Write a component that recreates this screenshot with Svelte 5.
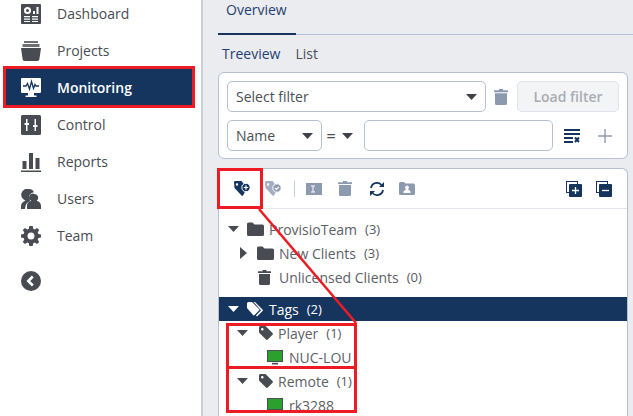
<script>
  const nav = [
    { id: 'dashboard', label: 'Dashboard' },
    { id: 'projects', label: 'Projects' },
    { id: 'monitoring', label: 'Monitoring', active: true },
    { id: 'control', label: 'Control' },
    { id: 'reports', label: 'Reports' },
    { id: 'users', label: 'Users' },
    { id: 'team', label: 'Team' }
  ];
</script>

{#snippet caret(cls)}
  <svg class={cls} viewBox="0 0 11 6" width="11" height="6"><path d="M0 0h11L5.500 6z" fill="currentColor" /></svg>
{/snippet}

{#snippet folder()}
  <svg viewBox="0 0 17 14" width="17" height="14"><path d="M0 2a1.500 1.500 0 0 1 1.500-1.500h4L7.500 2.500h8A1.500 1.500 0 0 1 17 4v8.500a1.500 1.500 0 0 1-1.500 1.500h-14A1.500 1.500 0 0 1 0 12.500z" fill="#484c52" /></svg>
{/snippet}

{#snippet tag()}
  <svg viewBox="0 0 14 14" width="14" height="14"><path d="M0 1.500A1.500 1.500 0 0 1 1.500 0H6.500l7 7a1.300 1.300 0 0 1 0 1.800l-4.700 4.700a1.300 1.300 0 0 1-1.800 0L0 6.500zM3.300 2a1.300 1.300 0 1 0 0 2.600 1.300 1.300 0 0 0 0-2.600z" fill="#484c52" fill-rule="evenodd" /></svg>
{/snippet}

{#snippet monitor()}
  <svg viewBox="0 0 16 16" width="16" height="16">
    <rect x="0.500" y="1.500" width="15" height="11" fill="#2ca02c" stroke="#4a4f55" />
    <path d="M5 13.800h6v1.700H5z" fill="#4a4f55" />
  </svg>
{/snippet}

<div class="page">
  <aside class="sidebar">
    <nav class="nav">
      {#each nav as item}
        <div class="nav-item" class:active={item.active}>
          <span class="nav-icon">
            <svg viewBox="0 0 20 20" width="20" height="20">
              {#if item.id === 'dashboard'}
                <path fill-rule="evenodd" d="M1 0h18a1 1 0 0 1 1 1v18a1 1 0 0 1-1 1H1a1 1 0 0 1-1-1V1a1 1 0 0 1 1-1zM6.500 3a3.500 3.500 0 1 0 0 7 3.500 3.500 0 0 0 0-7zm0 2a1.500 1.500 0 1 1 0 3 1.500 1.500 0 0 1 0-3zM12 7v3h2V7zm3.500-4v7h2V3zM3 12v1.300h6V12zm8 0v1.300h6V12zM3 14.500v1.300h6v-1.300zm8 0v1.300h6v-1.300zM3 17v1h6v-1zm8 0v1h6v-1z" fill="#484c52" />
              {:else if item.id === 'projects'}
                <path d="M3 0h14v2H3zM1.500 3h17v3h-17z" fill="#484c52" opacity="0.8" />
                <path d="M0 7h20l-1.500 10.500A2.500 2.500 0 0 1 16 20H4a2.500 2.500 0 0 1-2.500-2.500z" fill="#484c52" />
              {:else if item.id === 'monitoring'}
                <path fill-rule="evenodd" d="M1 0h18a1 1 0 0 1 1 1v13a1 1 0 0 1-1 1h-6v2.500h2.500V19h-11v-1.500H7V15H1a1 1 0 0 1-1-1V1a1 1 0 0 1 1-1z" fill="#fff" />
                <path d="M2 8h3l1.500-2.500L8.500 11l2-7.500 2 7L14 6.500l1 1.500h3" fill="none" stroke="#15355f" stroke-width="1.300" />
              {:else if item.id === 'control'}
                <path fill-rule="evenodd" d="M1.500 0h17A1.500 1.500 0 0 1 20 1.500v17a1.500 1.500 0 0 1-1.500 1.500h-17A1.500 1.500 0 0 1 0 18.500v-17A1.500 1.500 0 0 1 1.500 0zM5 4v4H3.500v2H5v6h1.500v-6H8V8H6.500V4zm8.500 0v6H12v2h1.500v4H15v-4h1.500v-2H15V4z" fill="#484c52" />
              {:else if item.id === 'reports'}
                <path d="M1.500 9h4v8h-4zM8 1h4v16H8zM14.500 6h4v11h-4zM0 18.500h20V20H0z" fill="#484c52" />
              {:else if item.id === 'users'}
                <path d="M8 0a5.500 5.500 0 0 1 5 3.200 5 5 0 0 0-3.800 8L8.500 12.500c-2 .8-3.500 2.500-4 4.500L4 20H0v-3c0-2.500 2-4.500 4.500-5.500A6 6 0 0 1 8 0z" fill="#484c52" />
                <path d="M13.500 5a3.700 3.700 0 0 1 2.200 6.700c2.500.8 4.300 2.500 4.300 5V20H6v-3.300c0-2.500 1.800-4.200 4.300-5A3.700 3.700 0 0 1 13.500 5z" fill="#484c52" />
              {:else if item.id === 'team'}
                <path fill-rule="evenodd" d="M8.300 0h3.400l.5 2.700 1.500.7 2.400-1.500 2.100 2.100-1.500 2.400.7 1.500 2.600.6v3l-2.600.6-.7 1.500 1.500 2.400-2.100 2.100-2.400-1.500-1.500.7-.5 2.700H8.300l-.5-2.700-1.500-.7-2.400 1.500-2.100-2.100 1.500-2.400-.7-1.500L0 11.500v-3l2.600-.6.7-1.500L1.800 4 3.900 1.900l2.400 1.500 1.500-.7zM10 6.500a3.500 3.500 0 1 0 0 7 3.500 3.500 0 0 0 0-7z" fill="#484c52" />
              {/if}
            </svg>
          </span>
          <span class="nav-label">{item.label}</span>
        </div>
      {/each}
    </nav>
    <button class="collapse" aria-label="Collapse">
      <svg viewBox="0 0 20 20" width="20" height="20">
        <circle cx="10" cy="10" r="10" fill="#484c52" />
        <path d="M11.800 5.500 7.300 10l4.500 4.500" fill="none" stroke="#fff" stroke-width="2.600" />
      </svg>
    </button>
  </aside>

  <main class="main">
    <div class="tabs">
      <div class="tab">Overview</div>
    </div>
    <div class="subtabs">
      <span class="subtab current">Treeview</span>
      <span class="subtab">List</span>
    </div>

    <section class="card filter">
      <div class="filter-row">
        <div class="field select-filter">
          <span>Select filter</span>
          {@render caret('caret')}
        </div>
        <svg class="trash" viewBox="0 0 14 16" width="14" height="16"><path d="M5 0h4v1.200h5v2H0v-2h5zM1 4.200h12V14.500a1.500 1.500 0 0 1-1.500 1.500h-9A1.500 1.500 0 0 1 1 14.500z" fill="#8c9ab0" /></svg>
        <button class="load">Load filter</button>
      </div>
      <div class="filter-row">
        <div class="field name">
          <span>Name</span>
          {@render caret('caret')}
        </div>
        <span class="equals">=</span>
        {@render caret('eq-caret')}
        <div class="field value"></div>
        <svg class="clear" viewBox="0 0 16 14" width="16" height="14">
          <path d="M0 0h16v2H0zM0 4h16v2H0zM0 8h9v2H0zM0 12h9v2H0z" fill="#15355f" />
          <path d="M11 8.500l4 4.500M15 8.500l-4 4.500" stroke="#15355f" stroke-width="2" />
        </svg>
        <svg class="plus" viewBox="0 0 14 14" width="14" height="14"><path d="M6.300 0h1.400v6.300H14v1.400H7.700V14H6.300V7.700H0V6.300h6.300z" fill="#8c9ab0" /></svg>
      </div>
    </section>

    <section class="card tree">
      <div class="toolbar">
        <div class="tool-group">
          <svg viewBox="0 0 16 15" width="16" height="15">
            <path fill-rule="evenodd" d="M0 1.200A1.200 1.200 0 0 1 1.200 0H7.500l5.500 7-4 7.500a1 1 0 0 1-1.500 0L.5 7zM3 2.300a1.200 1.200 0 1 0 0 2.400 1.200 1.200 0 0 0 0-2.400z" fill="#15355f" />
            <circle cx="12" cy="6.500" r="4.200" fill="#15355f" stroke="#fff" />
            <path d="M9.800 6.500h4.400M12 4.300v4.400" stroke="#fff" stroke-width="1.200" />
          </svg>
          <svg viewBox="0 0 16 15" width="16" height="15">
            <path fill-rule="evenodd" d="M0 1.200A1.200 1.200 0 0 1 1.200 0H7.500l5.500 7-4 7.500a1 1 0 0 1-1.500 0L.5 7zM3 2.300a1.200 1.200 0 1 0 0 2.400 1.200 1.200 0 0 0 0-2.400z" fill="#a3afc1" />
            <circle cx="12" cy="7" r="4.200" fill="#8c9ab0" stroke="#fff" />
            <path d="M10 7l1.500 1.500 2.400-2.700" stroke="#fff" fill="none" stroke-width="1.200" />
          </svg>
          <span class="tool-sep"></span>
          <svg viewBox="0 0 16 12" width="16" height="12">
            <path fill-rule="evenodd" d="M0 0h16v12H0zM5 2.500v1h1.500v5H5v1h4v-1H7.500v-5H9v-1z" fill="#8c9ab0" />
          </svg>
          <svg class="tool-trash" viewBox="0 0 14 15" width="14" height="15"><path d="M5 0h4v1.200h5V3H0V1.200h5zM1 4h12v9.500a1.500 1.500 0 0 1-1.500 1.500h-9A1.500 1.500 0 0 1 1 13.500z" fill="#8c9ab0" /></svg>
          <svg class="tool-refresh" viewBox="0 0 16 16" width="16" height="16">
            <path d="M2 7a6 6 0 0 1 10.500-3" fill="none" stroke="#15355f" stroke-width="1.800" />
            <path d="M14 9a6 6 0 0 1-10.500 3" fill="none" stroke="#15355f" stroke-width="1.800" />
            <path d="M15 1v5h-5zM1 15v-5h5z" fill="#15355f" />
          </svg>
          <svg viewBox="0 0 16 13" width="16" height="13">
            <path fill-rule="evenodd" d="M0 1.500A1.500 1.500 0 0 1 1.500 0H5l1.500 1.500h8A1.500 1.500 0 0 1 16 3v8.500a1.500 1.500 0 0 1-1.500 1.500h-13A1.500 1.500 0 0 1 0 11.500zM8 3.500a2 2 0 0 0-1 3.700L4.500 9.500V11h7V9.500L9 7.200a2 2 0 0 0-1-3.700z" fill="#8c9ab0" />
          </svg>
        </div>
        <div class="tool-group right">
          <svg viewBox="0 0 16 16" width="16" height="16">
            <rect x="0.500" y="0.500" width="11" height="11" fill="none" stroke="#15355f" />
            <rect x="3" y="3" width="13" height="13" rx="1" fill="#15355f" />
            <path d="M6 9.500h7M9.500 6v7" stroke="#fff" stroke-width="1.300" />
          </svg>
          <svg viewBox="0 0 16 16" width="16" height="16">
            <rect x="0.500" y="0.500" width="11" height="11" fill="none" stroke="#15355f" />
            <rect x="3" y="3" width="13" height="13" rx="1" fill="#15355f" />
            <path d="M6 9.500h7" stroke="#fff" stroke-width="1.300" />
          </svg>
        </div>
      </div>

      <div class="rows">
        <div class="row l0">
          {@render caret('tw')}
          {@render folder()}
          <span class="name-text">ProvisioTeam</span><span class="count">(3)</span>
        </div>
        <div class="row l1">
          <svg class="tw-right" viewBox="0 0 7 12" width="7" height="12"><path d="M0 0l7 6-7 6z" fill="#484c52" /></svg>
          {@render folder()}
          <span class="name-text">New Clients</span><span class="count">(3)</span>
        </div>
        <div class="row l2">
          <svg viewBox="0 0 13 15" width="13" height="15"><path d="M4.500 0h4v1.200H13v1.800H0V1.200h4.500zM1 4h11v9.500a1.500 1.500 0 0 1-1.500 1.500h-8A1.500 1.500 0 0 1 1 13.500z" fill="#484c52" /></svg>
          <span class="name-text">Unlicensed Clients</span><span class="count">(0)</span>
        </div>
        <div class="row selected">
          {@render caret('tw')}
          <svg viewBox="0 0 17 15" width="17" height="15">
            <path d="M0 1.500A1.500 1.500 0 0 1 1.500 0H5l7 7a1 1 0 0 1 0 1.500L7.500 13a1 1 0 0 1-1.500 0L0 6z" fill="#fff" />
            <path d="M8 0l7.500 7.500a1 1 0 0 1 0 1.500L10 14.500l-1-1 5-5.200L6.500 0z" fill="#fff" />
          </svg>
          <span class="name-text">Tags</span><span class="count">(2)</span>
        </div>
        <div class="row l3">
          {@render caret('tw')}
          {@render tag()}
          <span class="name-text">Player</span><span class="count">(1)</span>
        </div>
        <div class="row l4">
          {@render monitor()}
          <span class="name-text">NUC-LOU</span>
        </div>
        <div class="row l3">
          {@render caret('tw')}
          {@render tag()}
          <span class="name-text">Remote</span><span class="count">(1)</span>
        </div>
        <div class="row l4">
          {@render monitor()}
          <span class="name-text">rk3288</span>
        </div>
      </div>
    </section>
  </main>

  <!-- red annotations drawn over the screenshot -->
  <div class="mark mark-nav"></div>
  <div class="mark mark-tool"></div>
  <div class="mark mark-player"></div>
  <div class="mark mark-remote"></div>
  <svg class="mark-line" viewBox="0 0 633 416" width="633" height="416">
    <path d="M259 209 356 323" fill="none" stroke="#ed1c24" stroke-width="2.500" />
  </svg>
</div>

<style>
  :global(body) {
    margin: 0;
    overflow: hidden;
  }

  .page {
    position: relative;
    display: flex;
    width: 633px;
    height: 416px;
    overflow: hidden;
    background: #ebecf0;
    font-family: 'Open Sans', sans-serif;
    font-size: 14px;
    color: #4a4f55;
  }

  .sidebar {
    width: 201px;
    flex: none;
    background: #fff;
    border-right: 2px solid #c9cedb;
  }

  .nav {
    margin-top: -5px;
    padding: 0 6px;
  }

  .nav-item {
    display: flex;
    align-items: center;
    height: 37px;
    padding-left: 15px;
    color: #484c52;
  }

  .nav-item.active {
    background: #15355f;
    color: #fff;
    font-weight: 600;
  }

  .nav-icon {
    display: flex;
    width: 36px;
    flex: none;
  }

  .collapse {
    display: block;
    margin: 17px 0 0 21px;
    padding: 0;
    border: 0;
    background: none;
    line-height: 0;
  }

  .main {
    flex: 1;
    min-width: 0;
    padding: 0 5px 0 15px;
  }

  .tabs {
    height: 35px;
    margin-right: -5px;
    border-bottom: 1px solid #b5c0d3;
    box-sizing: border-box;
  }

  .tab {
    width: 78px;
    height: 35px;
    box-sizing: border-box;
    padding-left: 8px;
    line-height: 20px;
    color: #1f3f6e;
    font-weight: 500;
    border-bottom: 2px solid #15355f;
  }

  .subtabs {
    display: flex;
    gap: 15px;
    box-sizing: border-box;
    height: 37px;
    padding: 9px 0 0 4px;
    line-height: 19px;
  }

  .subtab.current {
    color: #1f3f6e;
    font-weight: 500;
  }

  .card {
    background: #fff;
    border: 1px solid #b5c0d3;
    border-radius: 6px;
    box-sizing: border-box;
  }

  .filter {
    height: 87px;
    padding: 8px;
    display: flex;
    flex-direction: column;
    gap: 8px;
  }

  .filter-row {
    display: flex;
    align-items: center;
    height: 31px;
  }

  .field {
    height: 31px;
    box-sizing: border-box;
    border: 1px solid #b5c0d3;
    border-radius: 5px;
    display: flex;
    align-items: center;
    justify-content: space-between;
    padding: 0 8px;
    background: #fff;
  }

  .select-filter {
    width: 259px;
  }

  .caret {
    color: #3e4248;
  }

  .eq-caret {
    color: #3e4248;
    margin-left: 6px;
    margin-right: 11px;
  }

  .trash {
    margin: 0 9px 0 8px;
  }

  .load {
    width: 102px;
    height: 31px;
    padding: 0;
    border: 1px solid #dfe2e8;
    border-radius: 5px;
    background: #f3f4f6;
    color: #a9acb2;
    font: 600 14px 'Open Sans', sans-serif;
  }

  .name {
    width: 95px;
  }

  .equals {
    width: 10px;
    margin-left: 4px;
    font-size: 16px;
    font-weight: 600;
    text-align: center;
  }

  .value {
    width: 189px;
  }

  .clear {
    margin-left: 11px;
  }

  .plus {
    margin-left: 18px;
  }

  .tree {
    margin-top: 9px;
    height: 260px;
    border-radius: 6px 6px 0 0;
    border-bottom: 0;
  }

  .toolbar {
    display: flex;
    justify-content: space-between;
    align-items: center;
    box-sizing: border-box;
    height: 40px;
    padding: 0 15px;
    border-bottom: 1px solid #e4e7ed;
  }

  .tool-group {
    display: flex;
    align-items: center;
    gap: 15px;
  }

  .tool-group.right {
    gap: 14px;
  }

  .tool-sep {
    width: 1px;
    height: 16px;
    background: #c9cedb;
    margin: 0 -4px 0 -2px;
  }

  .tool-trash {
    margin: 0 2px 0 1px;
  }

  .tool-refresh {
    margin-right: -1px;
  }

  .rows {
    padding-top: 8px;
  }

  .row {
    display: flex;
    align-items: center;
    height: 24px;
    white-space: nowrap;
    color: #5c6066;
  }

  .row svg {
    flex: none;
  }

  .tw {
    color: #484c52;
    margin-right: 8px;
  }

  .tw-right {
    margin-right: 10px;
  }

  .name-text {
    margin-left: 5px;
  }

  .count {
    margin-left: 8px;
    font-size: 13px;
    font-weight: 500;
    color: #55595f;
  }

  .l0 {
    padding-left: 9px;
  }

  .l1 {
    padding-left: 21px;
  }

  .l2 {
    padding-left: 39px;
  }

  .l2 .name-text {
    margin-left: 8px;
  }

  .l3 {
    padding-left: 18px;
  }

  .l3 .tw {
    margin-right: 11px;
  }

  .l4 {
    padding-left: 48px;
  }

  .l4 .name-text {
    margin-left: 6px;
  }

  .selected {
    margin-top: 8px;
    padding-left: 9px;
    background: #15355f;
    color: #fff;
    font-weight: 500;
  }

  .selected .tw,
  .selected .count {
    color: #fff;
  }

  .mark {
    position: absolute;
    box-sizing: border-box;
    border: 3px solid #ed1c24;
    pointer-events: none;
  }

  .mark-nav {
    left: 3px;
    top: 66px;
    width: 192px;
    height: 42px;
  }

  .mark-tool {
    left: 217px;
    top: 168px;
    width: 46px;
    height: 41px;
  }

  .mark-player {
    left: 226px;
    top: 323px;
    width: 131px;
    height: 46px;
  }

  .mark-remote {
    left: 226px;
    top: 366px;
    width: 131px;
    height: 47px;
  }

  .mark-line {
    position: absolute;
    left: 0;
    top: 0;
    pointer-events: none;
  }
</style>
